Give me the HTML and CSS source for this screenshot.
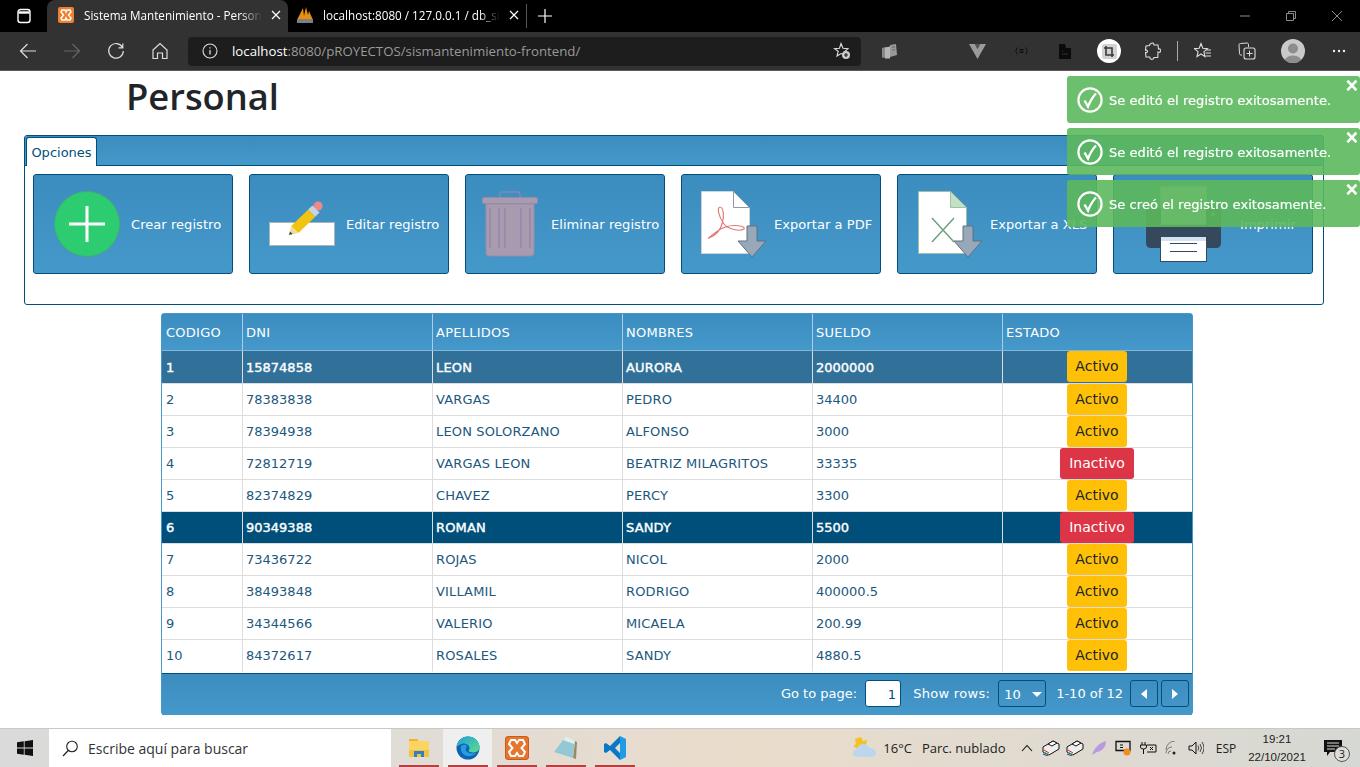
FILE: index.html
```html
<!DOCTYPE html>
<html lang="es">
<head>
	<meta charset="UTF-8">
	<title>Sistema Mantenimiento - Personal</title>
	<link rel="stylesheet" href="styles.css">
</head>
<body>
	<!-- navegador -->
	<div class="tabbar">
		<div class="tab-actions">
			<svg width="16" height="16" viewBox="0 0 16 16"><rect x="2" y="1.500" width="12" height="13" rx="2.500" fill="none" stroke="#fff" stroke-width="1.400"/><path d="M2.500 4.500h11" stroke="#fff" stroke-width="2.400"/></svg>
		</div>
		<div class="tab active">
			<svg class="favicon" width="16" height="16" viewBox="0 0 16 16"><rect width="16" height="16" rx="2" fill="#f0812c"/><path d="M4 3h3l1 2 1-2h3l1 2-2.500 3L13 11l-1 2H9L8 11l-1 2H4l-1-2 2.500-3L3 5z" fill="none" stroke="#fff" stroke-width="1.500"/></svg>
			<span class="tab-title">Sistema Mantenimiento - Person</span>
			<svg class="tab-close" width="10" height="10" viewBox="0 0 10 10"><path d="M1 1l8 8M9 1l-8 8" stroke="#fff" stroke-width="1.200"/></svg>
		</div>
		<div class="tab second">
			<svg class="favicon" width="18" height="18" viewBox="0 0 18 18"><path d="M1 14L7 2l1 8 2-9 2 8 1-4 4 9z" fill="#e8900c"/><rect x="1" y="13" width="16" height="4" fill="#7a7f8c"/></svg>
			<span class="tab-title">localhost:8080 / 127.0.0.1 / db_si</span>
			<svg class="tab-close" width="10" height="10" viewBox="0 0 10 10"><path d="M1 1l8 8M9 1l-8 8" stroke="#fff" stroke-width="1.200"/></svg>
		</div>
		<div class="tab-sep"></div>
		<svg class="tab-new" width="14" height="14" viewBox="0 0 14 14"><path d="M7 0v14M0 7h14" stroke="#fff" stroke-width="1.200"/></svg>
		<div class="win-controls">
			<svg width="46" height="10" viewBox="0 0 46 10"><path d="M18 5h10" stroke="#8a8a8a"/></svg>
			<svg width="46" height="10" viewBox="0 0 46 10"><path d="M18.500 2.500h7v7h-7zM20.500 2.500v-2h7v7h-2" fill="none" stroke="#8a8a8a"/></svg>
			<svg width="46" height="10" viewBox="0 0 46 10"><path d="M18 0l10 10M28 0L18 10" stroke="#8a8a8a"/></svg>
		</div>
	</div>
	<div class="toolbar">
		<span class="tool"><svg width="18" height="18" viewBox="0 0 18 18"><path d="M17 9H1.500M8.500 2l-7 7 7 7" fill="none" stroke="#ddd" stroke-width="1.200"/></svg></span>
		<span class="tool"><svg width="18" height="18" viewBox="0 0 18 18"><path d="M1 9h15.500M9.500 2l7 7-7 7" fill="none" stroke="#666" stroke-width="1.200"/></svg></span>
		<span class="tool"><svg width="18" height="18" viewBox="0 0 18 18"><path d="M15.500 5.500A7.300 7.300 0 1 0 16.300 9M15.800 1.500v4.300h-4.300" fill="none" stroke="#ddd" stroke-width="1.200"/></svg></span>
		<span class="tool"><svg width="18" height="18" viewBox="0 0 18 18"><path d="M2 8l7-6.500L16 8v8.500h-4.500V11h-5v5.500H2z" fill="none" stroke="#ddd" stroke-width="1.200"/></svg></span>
		<div class="address">
			<svg width="16" height="16" viewBox="0 0 16 16"><circle cx="8" cy="8" r="7" fill="none" stroke="#ddd" stroke-width="1.100"/><path d="M8 7v4.500M8 4.200v1.300" stroke="#ddd" stroke-width="1.300"/></svg>
			<span class="url"><b>localhost</b>:8080/pROYECTOS/sismantenimiento-frontend/</span>
			<svg class="addr-star" width="18" height="18" viewBox="0 0 18 18"><path d="M8 1.500l2 4.700 5 .4-3.800 3.300 1 3.100L8 11.500 4 14l1.200-4.800L1.500 6.600l5-.4z" fill="none" stroke="#ddd" stroke-width="1.100"/><circle cx="13" cy="13" r="4" fill="#ccc"/><path d="M13 11v4M11 13h4" stroke="#222" stroke-width="1.200"/></svg>
		</div>
		<span class="tool tool-first"><svg width="15" height="15" viewBox="0 0 15 15"><path d="M0 4l4-1v11l-4-.5z" fill="#8a8a8a"/><path d="M3 3.500l5-1v12H3z" fill="#b5b5b5"/><path d="M8 1l6-1 1 11-7 2z" fill="#999"/><path d="M10 3h3M10 6h3" stroke="#666"/></svg></span>
		<span class="tool tool-gap"><svg width="17" height="15" viewBox="0 0 17 15"><path d="M0 0h6l2.500 5L11 0h6L8.500 15z" fill="#9a9a9a"/><path d="M6 0l2.500 5L11 0z" fill="#555"/></svg></span>
		<span class="tool"><svg width="13" height="8" viewBox="0 0 13 8"><path d="M2.500.5C1 .5 2 4 .5 4 2 4 1 7.500 2.500 7.500M10.500.5C12 .5 11 4 12.500 4 11 4 12 7.500 10.500 7.500M4.500 2.500h4M4.500 4h4M4.500 5.500h4" fill="none" stroke="#111"/></svg></span>
		<span class="tool"><svg width="12" height="15" viewBox="0 0 12 15"><path d="M0 0h6l1 4h5v11H0z" fill="#0b0b0b"/><path d="M3 7h1M3 10h6" stroke="#333"/></svg></span>
		<span class="tool"><span class="ext-on"><span class="crop-box"><svg width="10" height="11" viewBox="0 0 10 11"><path d="M2 0v9h8M0 2h8v9" fill="none" stroke="#3a3a3a" stroke-width="1.600"/></svg></span></span></span>
		<span class="tool"><svg width="16" height="18" viewBox="0 0 16 18"><path d="M6 1.500c1.500-1 3-.5 3 1.500h4l.5 4c2-.5 2.500 1 2 2.500-.5 1-1.500 1-2.500.5l-.2 5.500L9 15.500c0 2-3 2.500-4 .8-.4-.8-.2-1-.3-1.300L1 15l-.5-4.500c2 .5 2.500-1 1.500-2-1-1-1.500-.5-1.500-.5L1 4l3.500-.5C4.500 2.500 5 2 6 1.500z" fill="none" stroke="#ddd" stroke-width="1.100"/></svg></span>
		<span class="tool-sep"></span>
		<span class="tool tool-fav"><svg width="18" height="18" viewBox="0 0 18 18"><path d="M7 1.500l1.800 4.700 4.700.4-3.600 3.100 1 4.800L7 12l-4 2.500 1.100-4.800L.5 6.600l4.700-.4zM12 8h5M11.500 11h5.500M11.500 14h5.500" fill="none" stroke="#ddd" stroke-width="1.100"/></svg></span>
		<span class="tool"><svg width="18" height="18" viewBox="0 0 18 18"><path d="M4 13H3c-1 0-1.500-.5-1.500-1.500L1 3c0-1 .5-1.500 1.500-1.500L9 1c1 0 1.500.5 1.500 1.500V5" fill="none" stroke="#ddd"/><rect x="6" y="6" width="11" height="11" rx="2" fill="none" stroke="#ddd" stroke-width="1.100"/><path d="M11.500 8.500v6M8.500 11.500h6" stroke="#ddd"/></svg></span>
		<span class="tool tool-avatar"><span class="avatar"><svg width="24" height="24" viewBox="0 0 24 24"><circle cx="12" cy="9.500" r="5" fill="#8d8d8d"/><ellipse cx="12" cy="23" rx="9" ry="6.500" fill="#8d8d8d"/></svg></span></span>
		<span class="tool tool-more"><svg width="14" height="4" viewBox="0 0 14 4"><circle cx="2" cy="2" r="1.200" fill="#eee"/><circle cx="7" cy="2" r="1.200" fill="#eee"/><circle cx="12" cy="2" r="1.200" fill="#eee"/></svg></span>
	</div>

	<!-- pagina -->
	<div class="page">
		<h1 class="title">Personal</h1>

		<div class="panel">
			<div class="panel-head"><span class="panel-tab">Opciones</span></div>
			<div class="actions">
				<a class="action act-crear">
					<svg width="66" height="66" viewBox="0 0 66 66"><circle cx="33" cy="33" r="32.500" fill="#2ecc71" stroke="#3fae76"/><path d="M33 15v36M15 33h36" stroke="#fff" stroke-width="3"/></svg>
					Crear registro
				</a>
				<a class="action act-editar">
					<svg width="66" height="66" viewBox="0 0 66 66"><rect x=".5" y="31.500" width="65" height="23" fill="#fff" stroke="#a9b4bd"/><circle cx="49" cy="15" r="4.500" fill="#ee8a85"/><path d="M43.400 14.500L50.600 21.500 46.200 25.700 39 18.700z" fill="#c7d3de"/><path d="M39 18.700L46.200 25.700 29.400 41.900 22.200 34.900z" fill="#f1c40f"/><path d="M22.200 34.900L29.400 41.900 20 44z" fill="#eedc9a"/><path d="M20 44l1-3.600 2.700 2.600z" fill="#444"/></svg>
					Editar registro
				</a>
				<a class="action act-eliminar">
					<svg width="56" height="66" viewBox="0 0 56 66"><path d="M18 7V3q0-2 2-2h16q2 0 2 2v4" fill="none" stroke="#9a8aa8"/><rect x=".5" y="6.500" width="55" height="6" rx="1.500" fill="#a79bb0" stroke="#9a8aa8"/><path d="M4 13h48v49q0 3-3 3H7q-3 0-3-3z" fill="#a79bb0" stroke="#9a8aa8"/><path d="M8 17v40M17 17v40M23 17v40M39 17v40M48 17v40" stroke="#8e7aa6"/></svg>
					Eliminar registro
				</a>
				<a class="action act-pdf">
					<svg width="66" height="66" viewBox="0 0 66 66"><path d="M.5.500h32l16 16v46H.5z" fill="#fff" stroke="#cfd4d9"/><path d="M32.500.500v16h16z" fill="#fff" stroke="#8d99a6"/><path d="M8 47c5-2 11-7 13-14 3-8 1-17-2-17-3 0-2 9 4 17 4 5 16 8 20 5 2-3-10-5-19-2-8 3-19 13-16 11z" fill="none" stroke="#e07b7b" stroke-width="1.200"/><path d="M46 35h10v15h9L51 66 37 50h9z" fill="#98a8b8" stroke="#5f7183"/></svg>
					Exportar a PDF
				</a>
				<a class="action act-xls">
					<svg width="66" height="66" viewBox="0 0 66 66"><path d="M.5.500h32l16 16v46H.5z" fill="#fff" stroke="#9fbfa8"/><path d="M32.500.500v16h16z" fill="#c3e2c1" stroke="#9fbfa8"/><path d="M14 27l22 24M36 27L14 51" stroke="#6aa37f" stroke-width="1.500"/><path d="M45 35h10v15h9L50 66 36 50h9z" fill="#98a8b8" stroke="#5f7183"/></svg>
					Exportar a XLS
				</a>
				<a class="action act-imprimir">
					<svg width="77" height="76" viewBox="0 0 77 76"><path d="M15.500.500h46v38h-46z" fill="#c2cdd1" stroke="#9fb0b8"/><path d="M1 27q0-5 5-5h10v17h45V22h10q5 0 5 5v30q0 5-5 5H6q-5 0-5-5z" fill="#34495e"/><circle cx="68" cy="28" r="2" fill="#5fb268"/><rect x="15.500" y="50.500" width="46" height="25" fill="#fff" stroke="#34495e"/><rect x="16" y="51" width="45" height="4" fill="#d5e2ee"/><path d="M25 57.500h27M25 65.500h27" stroke="#34495e"/></svg>
					Imprimir
				</a>
			</div>
		</div>

		<div class="datatable">
			<table>
				<thead>
					<tr><th class="c-cod">CODIGO</th><th>DNI</th><th>APELLIDOS</th><th>NOMBRES</th><th>SUELDO</th><th class="c-est">ESTADO</th></tr>
				</thead>
				<tbody>
					<tr class="row-hover"><td>1</td><td>15874858</td><td>LEON</td><td>AURORA</td><td>2000000</td><td><span class="badge on">Activo</span></td></tr>
					<tr><td>2</td><td>78383838</td><td>VARGAS</td><td>PEDRO</td><td>34400</td><td><span class="badge on">Activo</span></td></tr>
					<tr><td>3</td><td>78394938</td><td>LEON SOLORZANO</td><td>ALFONSO</td><td>3000</td><td><span class="badge on">Activo</span></td></tr>
					<tr><td>4</td><td>72812719</td><td>VARGAS LEON</td><td>BEATRIZ MILAGRITOS</td><td>33335</td><td><span class="badge off">Inactivo</span></td></tr>
					<tr><td>5</td><td>82374829</td><td>CHAVEZ</td><td>PERCY</td><td>3300</td><td><span class="badge on">Activo</span></td></tr>
					<tr class="row-selected"><td>6</td><td>90349388</td><td>ROMAN</td><td>SANDY</td><td>5500</td><td><span class="badge off">Inactivo</span></td></tr>
					<tr><td>7</td><td>73436722</td><td>ROJAS</td><td>NICOL</td><td>2000</td><td><span class="badge on">Activo</span></td></tr>
					<tr><td>8</td><td>38493848</td><td>VILLAMIL</td><td>RODRIGO</td><td>400000.5</td><td><span class="badge on">Activo</span></td></tr>
					<tr><td>9</td><td>34344566</td><td>VALERIO</td><td>MICAELA</td><td>200.99</td><td><span class="badge on">Activo</span></td></tr>
					<tr><td>10</td><td>84372617</td><td>ROSALES</td><td>SANDY</td><td>4880.5</td><td><span class="badge on">Activo</span></td></tr>
				</tbody>
			</table>
			<div class="paginator">
				<span>Go to page:</span>
				<span class="pg-input">1</span>
				<span class="pg-rows">Show rows:</span>
				<span class="pg-select">10<i class="caret"></i></span>
				<span class="pg-count">1-10 of 12</span>
				<span class="pg-btn"><svg width="6" height="10" viewBox="0 0 6 10"><path d="M6 0v10L0 5z" fill="#fff"/></svg></span>
				<span class="pg-btn"><svg width="6" height="10" viewBox="0 0 6 10"><path d="M0 0v10l6-5z" fill="#fff"/></svg></span>
			</div>
		</div>
	</div>

	<!-- avisos -->
	<div class="toasts">
		<div class="toast">
			<svg width="26" height="26" viewBox="0 0 26 26"><circle cx="13" cy="13" r="11.600" fill="none" stroke="#fff" stroke-width="2.200"/><path d="M7.500 13.500l3.500 6c2.500-6 5-10 8-13" fill="none" stroke="#fff" stroke-width="2.400"/></svg>
			Se editó el registro exitosamente.
			<span class="toast-x">×</span>
		</div>
		<div class="toast">
			<svg width="26" height="26" viewBox="0 0 26 26"><circle cx="13" cy="13" r="11.600" fill="none" stroke="#fff" stroke-width="2.200"/><path d="M7.500 13.500l3.500 6c2.500-6 5-10 8-13" fill="none" stroke="#fff" stroke-width="2.400"/></svg>
			Se editó el registro exitosamente.
			<span class="toast-x">×</span>
		</div>
		<div class="toast">
			<svg width="26" height="26" viewBox="0 0 26 26"><circle cx="13" cy="13" r="11.600" fill="none" stroke="#fff" stroke-width="2.200"/><path d="M7.500 13.500l3.500 6c2.500-6 5-10 8-13" fill="none" stroke="#fff" stroke-width="2.400"/></svg>
			Se creó el registro exitosamente.
			<span class="toast-x">×</span>
		</div>
	</div>

	<!-- barra de tareas -->
	<div class="taskbar">
		<span class="start"><svg width="16" height="16" viewBox="0 0 16 16"><path d="M0 2.300l6.800-1v6.300H0zM7.600 1.200L16 0v7.600H7.600zM0 8.400h6.800v6.300l-6.800-1zM7.600 8.400H16V16l-8.400-1.200z" fill="#111"/></svg></span>
		<div class="search">
			<svg width="16" height="17" viewBox="0 0 16 17"><circle cx="10" cy="6.500" r="5.300" fill="none" stroke="#222" stroke-width="1.100"/><path d="M6.200 10.500L1 16" stroke="#222" stroke-width="1.200"/></svg>
			Escribe aquí para buscar
		</div>
		<span class="app"><svg width="22" height="22" viewBox="0 0 22 22"><path d="M1 2h8l2 2H1z" fill="#f0b428"/><rect x="1" y="4" width="20" height="16" fill="#fbd560"/><rect x="1" y="13" width="20" height="7" fill="#f3c33f"/><path d="M6 20v-6h10v6h-3v-3H9v3z" fill="#2f7fc6"/></svg></span>
		<span class="app app-open"><svg width="24" height="24" viewBox="0 0 24 24"><defs><linearGradient id="edge" x1="0" y1="0" x2="1" y2="1"><stop offset="0" stop-color="#1f9fd8"/><stop offset="1" stop-color="#5be08a"/></linearGradient></defs><circle cx="12" cy="12" r="11.500" fill="#0c62b4"/><path d="M.7 11C1.500 5 6 .5 12 .5c6.500 0 11.500 5 11.500 10.500 0 4-3.500 5.500-6.500 5.500-2.500 0-4.500-1-4.500-2 1-1 1.500-2.500.5-4-1.500-3-5-3.500-7.500-2.500C3 9 1.500 10 .7 11z" fill="url(#edge)"/><path d="M5 10c-1 4 1 9 6 10 3 .6 7-.5 9.500-3-2 .5-5 .7-7.500 0-3-1-4-3-3-5 .5-1 1-2 .5-3-2-.5-4 0-5.500 1z" fill="#2a9be0"/></svg></span>
		<span class="app"><svg width="24" height="24" viewBox="0 0 24 24"><rect x=".5" y=".5" width="23" height="23" rx="2.500" fill="#e9742b" stroke="#c75c1d"/><path d="M6 4h4l2 3 2-3h4l2 4-3.500 4L20 16l-2 4h-4l-2-3-2 3H6l-2-4 3.500-4L4 8z" fill="none" stroke="#fff" stroke-width="2"/></svg></span>
		<span class="app"><svg width="24" height="24" viewBox="0 0 24 24"><path d="M21 5l2 1-1 17-3-1z" fill="#9a8a60"/><path d="M12 0l9 5-2 17L0 16z" fill="#93c8d4"/><path d="M12 0l9 5-1 3-11-4z" fill="#e6eced"/></svg></span>
		<span class="app"><svg width="22" height="24" viewBox="0 0 22 24"><path d="M16 0l6 3v18l-6 3z" fill="#1f9ce6"/><path d="M16 0v7l-5 5 5 5v7L6 14l-4 3-2-1V8l2-1 4 3z" fill="#0a78c7"/></svg></span>

		<div class="tray">
			<svg class="weather" width="26" height="24" viewBox="0 0 26 24"><path d="M9 1l2 4 4-1-1 5-8 4-5-3 3-2-1-5z" fill="#f6c21c"/><path d="M5 21q-4-.5-4-4t4-4q1-5 6-5 5 0 6.500 4 6-.5 6.500 4.500 0 4.500-5 4.500z" fill="#bcd6ee"/></svg>
			<span class="temp">16°C</span>
			<span class="sky">Parc. nublado</span>
			<span class="tray-ico"><svg width="12" height="8" viewBox="0 0 12 8"><path d="M1 7l5-5.500L11 7" fill="none" stroke="#111" stroke-width="1.100"/></svg></span>
			<span class="tray-ico"><svg width="18" height="16" viewBox="0 0 18 16"><path d="M1 7l10-6 6 3v5l-10 6-6-3z" fill="#eee" stroke="#111"/><path d="M6 4l5-3 4 2-5 3z" fill="#fff" stroke="#111"/><path d="M2 10l5 3" stroke="#e02020"/><path d="M1.500 12l5 2.500" stroke="#1f9e3b"/><path d="M1 14l5 2" stroke="#2030d0"/></svg></span>
			<span class="tray-ico"><svg width="18" height="16" viewBox="0 0 18 16"><path d="M1 7l10-6 6 3v5l-10 6-6-3z" fill="#eee" stroke="#111"/><path d="M6 4l5-3 4 2-5 3z" fill="#fff" stroke="#111"/><path d="M2 10l5 3" stroke="#e02020"/><path d="M1.500 12l5 2.500" stroke="#1f9e3b"/><path d="M1 14l5 2" stroke="#2030d0"/></svg></span>
			<span class="tray-ico"><svg width="16" height="16" viewBox="0 0 16 16"><path d="M1 15C3 8 8 3 15 1c0 5-3 10-9 11z" fill="#b99ae0"/></svg></span>
			<span class="tray-ico"><svg width="16" height="16" viewBox="0 0 16 16"><path d="M1 1.500h14v9H1z" fill="none" stroke="#111" stroke-width="1.300"/><path d="M5 5h3M5 7.500h3" stroke="#111"/><circle cx="12" cy="12" r="3.500" fill="#f28c1c"/></svg></span>
			<span class="tray-ico"><svg width="18" height="12" viewBox="0 0 18 12"><path d="M3 0v3M6 0v3M1.500 3h6v2q0 2-3 2t-3-2zM4.500 7v5M8 3h9v7H8M11 5l3 3M14 5l-3 3" fill="none" stroke="#111"/></svg></span>
			<span class="tray-ico"><svg width="14" height="14" viewBox="0 0 14 14"><path d="M1 9a9 9 0 0 1 9-9M1 12a6 6 0 0 1 6-6M3 13a3 3 0 0 1 3-3" fill="none" stroke="#777"/><circle cx="9" cy="12" r="1.500" fill="#222"/></svg></span>
			<span class="tray-ico"><svg width="16" height="14" viewBox="0 0 16 14"><path d="M1 5h3l4-4v12L4 9H1z" fill="none" stroke="#111"/><path d="M10 4.500q1.500 2.500 0 5M12 3q3 4 0 8M14 1q4 6 0 12" fill="none" stroke="#444"/></svg></span>
			<span class="lang">ESP</span>
			<span class="clock">19:21<br>22/10/2021</span>
			<span class="notify">
				<svg width="18" height="16" viewBox="0 0 18 16"><path d="M0 0h18v12H6l-3 4v-4H0z" fill="#111"/><path d="M3 3h12M3 6h12M3 9h8" stroke="#ddd"/></svg>
				<span class="notify-n">3</span>
			</span>
		</div>
	</div>
</body>
</html>
```

FILE: styles.css
```css
*{box-sizing:border-box;}
html,body{margin:0;padding:0;height:767px;overflow:hidden;}
body{display:flex;flex-direction:column;background:#fff;font-family:"DejaVu Sans",sans-serif;font-size:13px;color:#212529;}
a{text-decoration:none;}

/* navegador */
.tabbar{display:flex;align-items:flex-end;height:32px;background:#000;color:#fff;font-family:"Open Sans",sans-serif;font-size:11.700px;flex:none;}
.tab-actions{display:flex;align-items:center;justify-content:center;width:47px;height:32px;}
.tab{display:flex;align-items:center;width:238px;height:32px;padding:0 11px 2px 11px;border-radius:8px 8px 0 0;}
.tab.active{width:241px;background:#323232;}
.tab.second{padding-left:8px;}
.favicon{flex:none;margin-right:10px;}
.tab.second .favicon{margin-right:9px;}
.tab-title{flex:1;white-space:nowrap;-webkit-mask-image:linear-gradient(to right,#000 88%,transparent);mask-image:linear-gradient(to right,#000 88%,transparent);}
.tab-close{flex:none;margin-left:9px;}
.tab-sep{width:1px;height:24px;margin:0 0 4px 0;background:#555;}
.tab-new{margin:0 0 9px 11px;}
.win-controls{display:flex;align-items:center;margin-left:auto;height:32px;}

.toolbar{display:flex;align-items:center;height:39px;padding-left:6px;background:#323232;border-bottom:1px solid #5a5a5a;flex:none;}
.tool{display:flex;align-items:center;justify-content:center;width:44px;height:38px;flex:none;}
.tool-first{margin-left:6px;}
.tool-gap{margin-left:44px;}
.tool-sep{width:1px;height:20px;margin:0 3px 0 2px;background:#aaa;flex:none;}
.tool-avatar{margin-left:2px;}
.tool-more{margin-left:2px;}
.ext-on{display:flex;align-items:center;justify-content:center;width:24px;height:24px;border-radius:50%;background:#fff;}
.crop-box{display:flex;align-items:center;justify-content:center;width:15px;height:15px;background:#d2d2d2;border-radius:2px;}
.avatar{display:block;width:24px;height:24px;border-radius:50%;background:#c9c9c9;overflow:hidden;}
.avatar svg{display:block;}
.address{display:flex;align-items:center;width:673px;height:29px;margin-left:6px;padding:0 10px 0 14px;background:#1d1d1d;border-radius:4px;flex:none;}
.url{margin-left:14px;font-family:"Open Sans",sans-serif;font-size:13.250px;color:#9a9a9a;white-space:nowrap;}
.url b{font-weight:normal;color:#fff;}
.addr-star{margin-left:auto;}

/* pagina */
.page{flex:1;padding:0 36px 0 24px;min-height:0;}
.title{margin:0;height:64px;padding:1px 0 0 102px;font-family:"Open Sans",sans-serif;font-weight:600;font-size:36.300px;line-height:48px;color:#212529;}

.panel{height:170px;border:1px solid #00507a;border-radius:3px;}
.panel-head{height:30px;padding:1px 0 0 1px;background:linear-gradient(#3c8dbf,#4598ca);border-bottom:1px solid #00507a;}
.panel-tab{display:inline-block;width:71px;height:29px;line-height:29px;text-align:center;background:#fff;border:1px solid #00507a;border-bottom:0;border-radius:3px 3px 0 0;color:#00507a;}
.actions{display:flex;gap:16px;padding:8px;}
.action{display:flex;align-items:center;width:200px;height:100px;background:linear-gradient(#3c8dbf,#4598ca);border:1px solid #00507a;border-radius:3px;color:#fff;white-space:nowrap;letter-spacing:.06px;}
.act-crear{padding-left:20px;gap:11px;}
.act-editar{padding-left:19px;gap:11px;}
.act-eliminar{padding-left:16px;gap:13px;}
.act-pdf{padding-left:19px;gap:7px;}
.act-xls{padding-left:20px;gap:6px;}
.act-imprimir{padding-left:31px;gap:18px;}

.datatable{width:1032px;height:402px;margin:8px 0 0 137px;border:1px solid #4498cb;border-radius:3px;}
.datatable table{width:1030px;table-layout:fixed;border-collapse:separate;border-spacing:0;}
.datatable th{width:190px;height:37px;padding:0 4px 0 3px;text-align:left;font-weight:normal;color:#fff;letter-spacing:.25px;background:linear-gradient(#3c8dbf,#4598ca);border-right:1px solid #a8cde6;border-bottom:1px solid #7fb6da;}
.datatable th.c-cod{width:81px;padding-left:4px;}
.datatable th.c-est{width:189px;border-right:0;}
.datatable td{height:32px;padding:0 3px;color:#1c587e;border-right:1px solid #ddd;border-bottom:1px solid #ddd;}
.datatable td:first-child{padding-left:4px;}
.datatable td:nth-child(3),.datatable td:nth-child(4){letter-spacing:.15px;}
.datatable td:last-child{padding:0 1px 0 0;border-right:0;text-align:center;vertical-align:top;}
.datatable tbody tr:last-child td{border-bottom-color:transparent;}
.datatable .row-hover td{height:33px;background:#317098;color:#fff;-webkit-text-stroke:.4px #fff;}
.datatable .row-selected td{background:#004f7a;color:#fff;-webkit-text-stroke:.4px #fff;}
.badge{display:inline-block;height:31px;line-height:31px;border-radius:3px;font-size:14px;vertical-align:top;-webkit-text-stroke:0;}
.badge.on{width:60px;background:#ffc107;color:#212529;}
.badge.off{width:74px;background:#dc3545;color:#fff;}

.paginator{display:flex;align-items:center;justify-content:flex-end;height:42px;margin-top:1px;padding:0 3px 2px 0;background:linear-gradient(#3c8dbf,#4598ca);border-top:1px solid #00507a;color:#fff;}
.pg-input{width:36px;height:27px;line-height:27px;margin-left:8px;padding-right:4px;text-align:right;background:#fff;color:#00507a;border:1px solid #00507a;border-radius:3px;}
.pg-rows{margin-left:12px;letter-spacing:.3px;}
.pg-select{position:relative;display:block;width:48px;height:27px;line-height:28px;margin-left:8px;padding-left:5px;border:1px solid #00507a;border-radius:3px;}
.caret{position:absolute;right:3px;top:11px;border:5px solid transparent;border-top:5px solid #fff;border-bottom:0;}
.pg-count{margin:0 4px 0 10px;}
.pg-btn{display:flex;align-items:center;justify-content:center;width:28px;height:27px;margin-left:3px;border:1px solid #00507a;border-radius:3px;}

/* avisos */
.toasts{position:fixed;top:76px;right:0;display:flex;flex-direction:column;gap:5px;width:293px;}
.toast{position:relative;display:flex;align-items:center;gap:6px;height:47px;padding:1px 0 0 10px;background:rgba(92,184,92,.9);border-radius:3px;color:#fff;white-space:nowrap;letter-spacing:.06px;-webkit-text-stroke:.2px #fff;}
.toast-x{position:absolute;top:-1px;right:1px;font-size:17px;font-weight:bold;line-height:20px;-webkit-text-stroke:.5px #fff;}

/* barra de tareas */
.taskbar{display:flex;align-items:stretch;height:39px;background:linear-gradient(to right,#dadada,#e0dcd6 30%,#eadccb 55%,#e3dbcf 70%,#d6d8d3);border-top:1px solid #c8c8c8;font-family:"Open Sans",sans-serif;flex:none;}
.start{display:flex;align-items:center;justify-content:center;width:49px;}
.search{display:flex;align-items:center;gap:10px;width:342px;padding-left:13px;background:#fff;font-size:14px;color:#333;}
.app{position:relative;display:flex;align-items:center;justify-content:center;width:49px;}
.search + .app{margin-left:3px;}
.app::after{content:"";position:absolute;left:5px;right:4px;bottom:0;height:2px;background:#b5403f;}
.app-open{background:#efefef;}
.tray{display:flex;align-items:center;margin-left:auto;padding-right:4px;color:#222;}
.weather{margin-right:5px;}
.temp{font-size:13px;margin-right:10px;}
.sky{font-size:13px;margin-right:9px;}
.tray-ico{display:flex;align-items:center;justify-content:center;width:24.200px;}
.lang{width:36px;text-align:center;font-size:12px;}
.clock{width:60px;margin-left:3px;text-align:center;font-family:"Liberation Sans",sans-serif;font-size:11.500px;line-height:18px;}
.notify{position:relative;display:flex;justify-content:center;width:49px;padding-left:3px;}
.notify-n{position:absolute;left:27px;top:6px;width:16px;height:16px;line-height:14px;text-align:center;font-size:11px;background:#dcdcd8;border:1px solid #555;border-radius:50%;}
```
